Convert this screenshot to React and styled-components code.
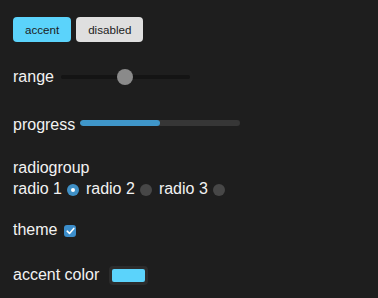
import React, { useState } from 'react';
import styled, { createGlobalStyle } from 'styled-components';

const Global = createGlobalStyle`
  html, body {
    margin: 0;
    background: #1e1e1e;
    color: #f2f2f2;
    font-family: "Liberation Sans", Arial, sans-serif;
  }
`;

const Page = styled.div`
  padding: 17px 13px;
  display: flex;
  flex-direction: column;
  align-items: flex-start;
`;

const ButtonGroup = styled.div`
  display: flex;
  gap: 5px;
`;

const Button = styled.button`
  height: 25px;
  padding: 0 12px;
  border: none;
  border-radius: 4px;
  font-family: "Liberation Sans", Arial, sans-serif;
  font-size: 11.6px;
  color: #1c1c1c;
  background: ${({ accent }) => (accent ? '#5bd3fb' : '#dfdfdf')};
  cursor: pointer;
`;

const Row = styled.label`
  display: flex;
  align-items: center;
  height: 20px;
  margin-top: ${({ top }) => top}px;
  font-size: 16px;
  line-height: 20px;
  white-space: nowrap;
`;

const Range = styled.input`
  -webkit-appearance: none;
  appearance: none;
  width: 129px;
  height: 16px;
  margin: 0 0 0 7px;
  background: transparent;
  &::-webkit-slider-runnable-track {
    height: 4px;
    border-radius: 2px;
    background: #141414;
  }
  &::-webkit-slider-thumb {
    -webkit-appearance: none;
    width: 16px;
    height: 16px;
    margin-top: -6px;
    border-radius: 50%;
    background: #8a8a8a;
  }
`;

const Progress = styled.div`
  width: 160px;
  height: 6px;
  margin-left: 5px;
  margin-top: -4px;
  border-radius: 3px;
  background: #363636;
  overflow: hidden;
`;

const Fill = styled.div`
  height: 100%;
  border-radius: 3px;
  background: #3f96c9;
`;

const Group = styled.div`
  margin-top: 23px;
  font-size: 16px;
  line-height: 20px;
`;

const RadioRow = styled.div`
  display: flex;
  align-items: center;
  height: 22px;
`;

const RadioLabel = styled.label`
  display: flex;
  align-items: center;
  margin-right: 7px;
`;

const Radio = styled.span`
  width: 12px;
  height: 12px;
  margin-left: 5px;
  margin-top: 2px;
  border-radius: 50%;
  box-sizing: border-box;
  background: ${({ on }) => (on ? '#3f90c6' : '#474747')};
  display: flex;
  align-items: center;
  justify-content: center;
  &::after {
    content: '';
    width: 4px;
    height: 4px;
    border-radius: 50%;
    background: #fff;
    display: ${({ on }) => (on ? 'block' : 'none')};
  }
`;

const Check = styled.span`
  width: 12px;
  height: 12px;
  margin-left: 7px;
  margin-top: 2px;
  border-radius: 3px;
  background: #3c8ecb;
  display: flex;
  align-items: center;
  justify-content: center;
`;

const ColorBox = styled.span`
  margin-left: 10px;
  padding: 3px;
  width: 33px;
  height: 13px;
  border-radius: 4px;
  background: #2c2c2c;
  display: flex;
`;

const Swatch = styled.span`
  flex: 1;
  border-radius: 2px;
  background: #5bd3fb;
`;

export default function App() {
  const [value] = useState(50);
  const [selected, setSelected] = useState(1);

  return (
    <Page>
      <Global />
      <ButtonGroup>
        <Button accent>accent</Button>
        <Button>disabled</Button>
      </ButtonGroup>

      <Row top={25}>
        range
        <Range type="range" min="0" max="100" defaultValue={value} />
      </Row>

      <Row top={28}>
        progress
        <Progress>
          <Fill style={{ width: value + '%' }} />
        </Progress>
      </Row>

      <Group>
        <div>radiogroup</div>
        <RadioRow>
          {[1, 2, 3].map(n => (
            <RadioLabel key={n} onClick={() => setSelected(n)}>
              radio {n}
              <Radio on={selected === n} />
            </RadioLabel>
          ))}
        </RadioRow>
      </Group>

      <Row top={20}>
        theme
        <Check>
          <svg width="9" height="8" viewBox="0 0 9 8">
            <path d="M1.2 4.2 L3.5 6.4 L7.8 1.4" fill="none" stroke="#fff" strokeWidth="1.6" strokeLinecap="round" strokeLinejoin="round" />
          </svg>
        </Check>
      </Row>

      <Row top={25}>
        accent color
        <ColorBox>
          <Swatch />
        </ColorBox>
      </Row>
    </Page>
  );
}
